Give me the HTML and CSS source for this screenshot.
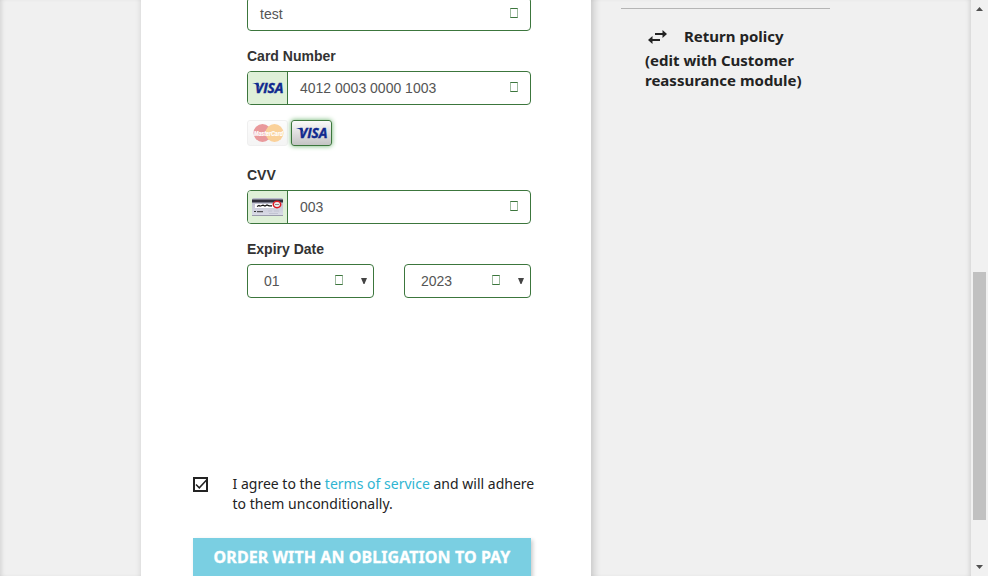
FILE: index.html
```html
<!DOCTYPE html>
<html lang="en">
<head>
<meta charset="utf-8">
<title>Checkout</title>
<link rel="stylesheet" href="styles.css">
</head>
<body>
<div class="page">
  <main class="panel">
    <form class="payment">
      <div class="control name"><span class="value">test</span><i class="valid"></i></div>
      <label class="label">Card Number</label>
      <div class="control">
        <span class="addon">
          <svg width="34" height="24" viewBox="0 0 34 24"><text class="visa" x="4" y="17" textLength="28.500" lengthAdjust="spacingAndGlyphs">VISA</text><path class="visa-tip" d="M1 7h6l2 5Q6 8 1 7z"/></svg>
        </span>
        <span class="value">4012 0003 0000 1003</span><i class="valid"></i>
      </div>
      <div class="brands">
        <span class="brand faded">
          <svg width="38" height="24" viewBox="0 0 38 24"><circle cx="13.500" cy="12" r="9" fill="#cf2026"/><circle cx="25.500" cy="12" r="9" fill="#f59a22"/><text class="mastercard" x="5" y="14.500" textLength="29" lengthAdjust="spacingAndGlyphs">MasterCard</text></svg>
        </span>
        <span class="brand active">
          <svg width="34" height="24" viewBox="0 0 34 24"><text class="visa" x="4" y="17" textLength="28.500" lengthAdjust="spacingAndGlyphs">VISA</text><path class="visa-tip" d="M1 7h6l2 5Q6 8 1 7z"/></svg>
        </span>
      </div>
      <label class="label">CVV</label>
      <div class="control">
        <span class="addon">
          <svg class="cvv" width="31" height="18" viewBox="0 0 31 18"><defs><linearGradient id="card" x2="0" y2="1"><stop stop-color="#b9bbcb"/><stop offset="1" stop-color="#dcdde8"/></linearGradient></defs><rect width="31" height="18" rx="1.500" fill="url(#card)"/><path d="M0 1.500h31v3H0z" fill="#30303c"/><path d="M3 6h19v4H3z" fill="#fff"/><path d="M5 8.500l2-1 1 .7 3-1 2 .8 2-1 2 .8h3" fill="none" stroke="#111" stroke-width="1.200"/><path d="M2 13.500h2m1 .2h6" stroke="#333"/><path d="M16 13h4m2 0h5m-10 2.500h9" stroke="#c2c4d2"/><ellipse cx="25" cy="6.500" rx="3.700" ry="3.200" fill="#eee" stroke="#e01822" stroke-width="1.500"/><path d="M23 6.500h4" stroke="#888"/><path d="M0 17.500h31" stroke="#9a9cac"/></svg>
        </span>
        <span class="value">003</span><i class="valid"></i>
      </div>
      <label class="label">Expiry Date</label>
      <div class="expiry">
        <div class="control select"><span class="value">01</span><i class="valid"></i><svg class="arrow" width="6" height="6" viewBox="0 0 6 6"><path d="M0 0h6L3.500 6h-1z"/></svg></div>
        <div class="control select"><span class="value">2023</span><i class="valid"></i><svg class="arrow" width="6" height="6" viewBox="0 0 6 6"><path d="M0 0h6L3.500 6h-1z"/></svg></div>
      </div>
    </form>
    <div class="terms">
      <svg class="check" width="16" height="16" viewBox="0 0 16 16"><rect x="1" y="1" width="13" height="13" fill="#fff" stroke="#232323" stroke-width="2"/><path d="M3 7.500l3.300 3.300L14.500 2" fill="none" stroke="#232323" stroke-width="1.500"/></svg>
      <p class="agreement">I agree to the <a class="link">terms of service</a> and will adhere<br>to them unconditionally.</p>
    </div>
    <div class="order">Order with an obligation to pay</div>
  </main>
  <aside class="reassurance">
    <div class="policy">
      <div class="heading"><svg class="swap" width="19" height="14" viewBox="0 0 19 14"><path d="M14.500 0L19 4l-4.500 4V5H7V3h7.500zM4.500 6L0 10l4.500 4v-3H12V9H4.500z"/></svg><span>Return policy</span></div>
      (edit with Customer<br>reassurance module)
    </div>
  </aside>
</div>
<div class="scrollbar">
  <svg width="7" height="4" viewBox="0 0 7 4"><path d="M3.500 0L7 4H0z"/></svg>
  <div class="thumb"></div>
  <svg class="down" width="7" height="4" viewBox="0 0 7 4"><path d="M0 0h7L3.500 4z"/></svg>
</div>
</body>
</html>
```
FILE: styles.css
```css
* { box-sizing: border-box; }
body {
  margin: 0;
  height: 576px;
  display: flex;
  overflow: hidden;
  background: #f0f0f0;
  color: #232323;
  font-family: "Noto Sans", sans-serif;
}
.page {
  width: 971px;
  height: 576px;
  padding-left: 141px;
  display: flex;
  align-items: flex-start;
  overflow: hidden;
  box-shadow: inset 4px 0 5px -3px rgba(0,0,0,.14), inset -4px 0 5px -3px rgba(0,0,0,.14);
}
.panel {
  width: 450px;
  height: 640px;
  margin-top: -20px;
  padding: 17px 0 0 52px;
  background: #fff;
  box-shadow: 2px 2px 8px rgba(0,0,0,.2);
  flex: none;
}
.payment {
  width: 284px;
  height: 477px;
  margin-left: 54px;
  font: 14px/20px "Liberation Sans", Arial, sans-serif;
}
.control {
  height: 34px;
  margin-bottom: 15px;
  display: flex;
  align-items: center;
  border: 1px solid #3c763d;
  border-radius: 4px;
  background: #fff;
  color: #555;
}
.addon {
  width: 40px;
  height: 32px;
  display: flex;
  align-items: center;
  justify-content: center;
  border-right: 1px solid #3c763d;
  border-radius: 3px 0 0 3px;
  background: #dff0d8;
}
.value { flex: 1; padding-left: 12px; }
.valid {
  width: 8px;
  height: 10px;
  margin: 0 12px 2px 0;
  border: 1px solid #3c763d;
  border-left-color: #9dba9e;
  border-right-color: #9dba9e;
}
.label {
  display: block;
  margin-bottom: 5px;
  color: #333;
  font-weight: bold;
}
.visa {
  fill: #10298e;
  stroke: #10298e;
  stroke-width: .4px;
  font: italic bold 13.5px "Open Sans", sans-serif;
}
.visa-tip { fill: #10298e; }
.mastercard {
  fill: #fff;
  stroke: #fff;
  stroke-width: .2px;
  font: italic bold 6.5px "Liberation Sans", sans-serif;
}
.brands { display: flex; gap: 3px; margin-bottom: 19px; }
.brand {
  width: 41px;
  height: 26px;
  display: flex;
  align-items: center;
  justify-content: center;
  border: 1px solid #bbb;
  border-radius: 3px;
  background: linear-gradient(#fafafa, #c4c4c4);
}
.faded { opacity: .45; border-color: #ddd; background: linear-gradient(#fafafa, #e8e8e8); }
.active { border-color: #3c763d; box-shadow: 0 0 5px #67b168; }
.expiry { display: flex; gap: 30px; }
.select { width: 127px; }
.select .value { padding-left: 16px; }
.select .valid { margin-right: 18px; }
.arrow { margin-right: 6px; fill: #444; }
.terms { display: flex; height: 64px; }
.check { margin: 3px 23.5px 0 0; flex: none; }
.agreement { margin: 0; font-size: 14px; line-height: 20px; letter-spacing: .01px; white-space: nowrap; }
.link { color: #2fb5d2; }
.order {
  width: 338px;
  height: 44px;
  background: #7acfe2;
  color: #fff;
  box-shadow: 2px 2px 4px rgba(0,0,0,.2);
  font-size: 16px;
  font-weight: bold;
  letter-spacing: .08px;
  -webkit-text-stroke: .3px #fff;
  line-height: 38px;
  text-align: center;
  text-transform: uppercase;
  white-space: nowrap;
}
.reassurance {
  width: 209px;
  margin: 8px 0 0 30px;
  border-top: 1px solid #b5b5b5;
}
.policy {
  padding: 16px 0 0 24px;
  font-size: 15px;
  font-weight: bold;
  line-height: 20px;
  white-space: nowrap;
}
.heading { display: flex; align-items: flex-start; height: 25px; line-height: 22px; }
.swap { margin: 5px 17px 0 3px; fill: #232323; }
.scrollbar {
  width: 17px;
  height: 576px;
  padding: 7px 2px 7px;
  display: flex;
  flex-direction: column;
  align-items: center;
  background: #f1f1f1;
  fill: #505050;
}
.thumb { width: 13px; height: 248px; margin-top: 261px; background: #c1c1c1; }
.down { margin-top: auto; }
```
